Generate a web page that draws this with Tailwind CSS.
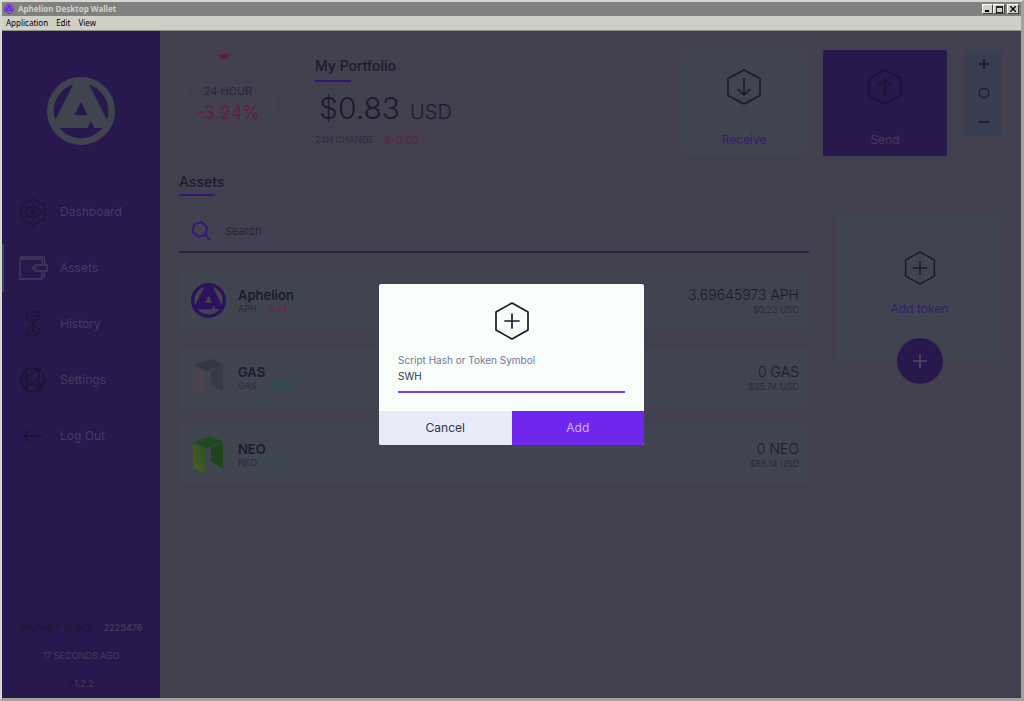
<!DOCTYPE html>
<html lang="en">
<head>
<meta charset="utf-8">
<title>Aphelion Desktop Wallet</title>
<script src="https://cdn.jsdelivr.net/npm/@tailwindcss/browser@4"></script>
</head>
<body class="flex h-screen flex-col overflow-hidden border-2 border-r-3 border-b-3 border-t-[#d8d7cf] border-r-[#a3a29a] border-b-[#a3a29a] border-l-[#d8d7cf] bg-[#42404f] font-['Inter',sans-serif] text-[#1c1a2e]">
<svg class="hidden">
  <symbol id="logo" viewBox="0 0 68 68">
    <circle cx="34" cy="34" r="30.7" fill="none" stroke="currentColor" stroke-width="6.6"/>
    <path fill="currentColor" fill-rule="evenodd" d="M27 6 7 45l6 6h27.7l3-7.3 3.6 7.3h8.4l5.3-6L41.3 6ZM34 24.7l6.7 13.6H27.300Z"/>
  </symbol>
  <symbol id="hexplus" viewBox="0 0 34 38">
    <path d="M17 1 33 10v18L17 37 1 28V10ZM17 12v14M10 19h14" fill="none" stroke="currentColor" stroke-width="1.700" stroke-linejoin="round" stroke-linecap="round"/>
  </symbol>
</svg>

<header class="shrink-0">
  <div class="flex h-3.5 items-center gap-1 bg-[#808080] pr-0.5 pl-0.5">
    <svg class="size-2.5 text-[#7126ee]"><use href="#logo"/></svg>
    <h1 class="flex-1 font-['Noto_Sans',sans-serif] text-[8px] leading-3 font-bold text-[#d4d0c8]">Aphelion Desktop Wallet</h1>
    <div class="flex">
      <button aria-label="Minimize" class="flex h-2.5 w-[11px] items-end border border-t-white border-r-[#404040] border-b-[#404040] border-l-white bg-[#d4d0c8] px-0.5 pb-px"><span class="h-0.5 w-1 bg-black"></span></button>
      <button aria-label="Maximize" class="flex h-2.5 w-3 items-center justify-center border border-t-white border-r-[#404040] border-b-[#404040] border-l-white bg-[#d4d0c8]"><span class="size-[7px] border border-t-2 border-[#222]"></span></button>
      <button aria-label="Close" class="ml-0.5 flex h-2.5 w-3 items-center justify-center border border-t-white border-r-[#404040] border-b-[#404040] border-l-white bg-[#d4d0c8]"><svg class="size-1.5" viewBox="0 0 6 6"><path d="M0 0 6 6M6 0 0 6" stroke="#111" stroke-width="1.500"/></svg></button>
    </div>
  </div>
  <nav class="flex h-[15px] items-center gap-2 border-b border-[#8f8e89] bg-[#d0cfc6] px-1 font-['Noto_Sans',sans-serif] text-[8px] leading-3 text-black">
    <button>Application</button><button>Edit</button><button>View</button>
  </nav>
</header>

<div class="relative flex min-h-0 flex-1">
  <aside class="flex w-[158px] shrink-0 flex-col bg-[#28184e] pt-[46px] text-[#443d5a]">
    <svg class="size-[68px] self-center text-[#40444f]"><use href="#logo"/></svg>
    <nav class="mt-[39px] flex flex-col text-[12px]">
      <a href="#" class="flex h-14 items-center gap-3 pl-4">
        <svg class="h-7 w-[30px] text-[#1c1533]" viewBox="0 0 30 28" fill="none" stroke="currentColor" stroke-width="1.300"><path d="M15 1 27 7.500v13L15 27 3 20.500v-13ZM7 14c4-7 12-7 16 0-4 7-12 7-16 0Z"/><path d="m15 11 3 3-3 3-3-3Z" fill="currentColor"/></svg>Dashboard</a>
      <a href="#" class="flex h-14 items-center">
        <span class="h-12 w-0.5 bg-[#40444f]"></span>
        <svg class="mr-3 ml-3.5 h-7 w-[30px]" viewBox="0 0 30 28" fill="none" stroke="currentColor" stroke-width="1.300"><path d="M24 10V5H4.500L2 3.500M2 3.500V25h22v-7M2.500 3H26.500v7M26.500 18v4.500H24M18 11h11v6H18l-4-3ZM17.500 13v2"/></svg>Assets</a>
      <a href="#" class="flex h-14 items-center gap-3 pl-4">
        <svg class="h-7 w-[30px] text-[#1c1533]" viewBox="0 0 30 28" fill="none" stroke="currentColor" stroke-width="1.300"><ellipse cx="15" cy="4" rx="6.500" ry="2.500"/><path d="M8.500 4v3c0 3 6.500 5 6.500 7s-6.500 4-6.500 7v2c0 2 2 3 6.500 3s6.500-1 6.500-3v-2c0-3-6.500-5-6.500-7s6.500-4 6.500-7V4M11.500 8.500 15 11l3.500-2.500M15 16v5M10 24l5-3 5 3"/></svg>History</a>
      <a href="#" class="flex h-14 items-center gap-3 pl-4">
        <svg class="h-7 w-[30px] text-[#1a1430]" viewBox="0 0 30 28" fill="none" stroke="currentColor" stroke-width="1.400" stroke-linejoin="round"><path d="M8.500 3h13L28 14l-6.500 11h-13L2 14ZM8.500 3v22M8.500 11 21 3l-.5 18L8.500 13.500M20.500 21l1 4M2 14l6.500-3M8.500 25l-6.500-11M8.500 21 21 13M28 14l-7.500 7"/></svg>Settings</a>
      <a href="#" class="flex h-14 items-center gap-3 pl-4">
        <svg class="h-7 w-[30px] text-[#1a1430]" viewBox="0 0 30 28" fill="none" stroke="currentColor" stroke-width="1.600"><path d="M24 14H6M12.500 7.500 6 14l6.500 6.500"/></svg>Log Out</a>
    </nav>
    <div class="mt-auto flex flex-col items-center text-[9px] leading-7">
      <p class="flex gap-2.5"><span class="text-[#1c1533]">MAINNET BLOCK</span><span class="font-medium">2225476</span></p>
      <p>17 SECONDS AGO</p>
      <p><span class="text-[#1c1533]">V</span>1.2.2</p>
    </div>
  </aside>

  <main class="min-w-0 flex-1 px-[19px] pt-[19px]">
    <section class="flex">
      <div class="relative size-[98px] shrink-0 pt-[33px] text-center">
        <svg class="absolute inset-0 size-full" viewBox="0 0 98 98" fill="none"><circle cx="50" cy="52" r="45" stroke="#40444f" stroke-width="3"/><path d="m40.500 6.600 9-.8" stroke="#641a3f" stroke-width="4.500"/></svg>
        <p class="relative text-[11px] leading-4 text-[#292641]">24 HOUR</p>
        <p class="relative mt-0.5 text-[18px] leading-6 text-[#641e43]">-3.24%</p>
      </div>
      <div class="ml-[38px] flex-1 pt-2">
        <h2 class="text-[14px] leading-4 font-medium">My Portfolio</h2>
        <div class="mt-1.5 h-0.5 w-9 bg-[#351477]"></div>
        <p class="mt-2.5 ml-1 flex items-baseline gap-2.5 text-[30px] leading-8 font-light">$0.83 <span class="text-xl">USD</span></p>
        <p class="mt-1.5 flex items-center gap-2.5 text-[9px] leading-4 text-[#292a41]">24H CHANGE <span class="text-[11px] text-[#641e43]">$-0.03</span></p>
      </div>
      <button class="flex h-[106px] w-[124px] flex-col items-center justify-between rounded-xs bg-[#40444f] pt-[19px] pb-2 text-[12px] leading-4 text-[#351c6c]">
        <svg class="h-9 w-[34px] text-[#1a1a2f]" viewBox="0 0 34 36" fill="none" stroke="currentColor" stroke-width="1.600" stroke-linejoin="round"><path d="M17 1 33 9.500v17L17 35 1 26.500v-17ZM17 9v17M10.500 20l6.500 6 6.500-6"/></svg>Receive</button>
      <button class="ml-[17px] flex h-[106px] w-[124px] flex-col items-center justify-between rounded-xs bg-[#28184e] pt-[19px] pb-2 text-[12px] leading-4 text-[#443d5a]">
        <svg class="h-9 w-[34px] text-[#1a142e]" viewBox="0 0 34 36" fill="none" stroke="currentColor" stroke-width="1.600" stroke-linejoin="round"><path d="M17 1 33 9.500v17L17 35 1 26.500v-17ZM17 27V10M10.500 16l6.500-6 6.500 6"/></svg>Send</button>
      <div class="ml-[18px] flex h-[86px] w-[37px] flex-col items-center justify-around rounded-xs bg-[#3a3e51] text-[#1a1a2f]">
        <button aria-label="Zoom in"><svg class="size-3" viewBox="0 0 12 12" fill="none" stroke="currentColor" stroke-width="1.600"><path d="M6 1v10M1 6h10"/></svg></button>
        <button aria-label="Reset zoom"><svg class="size-3" viewBox="0 0 12 12" fill="none" stroke="currentColor" stroke-width="1.200"><path d="m6 1 4.700 2.500v5L6 11 1.300 8.500v-5Z"/></svg></button>
        <button aria-label="Zoom out"><svg class="size-3" viewBox="0 0 12 12" stroke="currentColor" stroke-width="1.600"><path d="M1 6h10"/></svg></button>
      </div>
    </section>

    <h2 class="mt-[18px] text-[14px] leading-4 font-medium">Assets</h2>
    <div class="mt-1 h-0.5 w-9 bg-[#351477]"></div>

    <section class="mt-[18px] flex items-start gap-7">
      <div class="flex flex-1 flex-col gap-[18px]">
        <div class="flex h-[39px] items-center gap-3.5 border-b-2 border-[#222640] pb-1 pl-3">
          <svg class="size-5" viewBox="0 0 20 20" fill="none" stroke="#35157a" stroke-width="1.800" stroke-linejoin="round"><path d="m3 3.500 7.500-2.500L16 6l-1 7-7 3-6.500-5ZM14 13l5 6"/></svg>
          <input type="search" aria-label="Search" placeholder="Search" class="h-6 min-w-0 flex-1 bg-transparent text-[11px] leading-6 outline-none placeholder:text-[#262539]">
        </div>
        <article class="flex h-[59px] items-center rounded-xs bg-[#40444f] px-2.5">
          <svg class="ml-0.5 size-[35px] text-[#2c125c]"><use href="#logo"/></svg>
          <div class="ml-3 flex-1"><h3 class="text-[13px] leading-4 font-semibold">Aphelion</h3><p class="flex gap-2 text-[9px] leading-3 text-[#292a41]">APH <span class="text-[#6b2045]">-3.24</span></p></div>
          <div class="text-right"><p class="text-sm leading-[18px] font-light">3.69645973 APH</p><p class="text-[9px] leading-3 text-[#292a41]">$0.23 USD</p></div>
        </article>
        <article class="flex h-[59px] items-center rounded-xs bg-[#40444f] px-2.5">
          <svg class="ml-0.5 h-[38px] w-[35px]" viewBox="0 0 35 38"><path d="M3 6 20 0l12 6-17 6Z" fill="#343643"/><path d="M2 7.500 14 13v24L2 32Z" fill="#4b444f"/><path d="m20 12 12-5v25l-12-6Z" fill="#373946"/></svg>
          <div class="ml-3 flex-1"><h3 class="text-[13px] leading-4 font-semibold">GAS</h3><p class="flex gap-2 text-[9px] leading-3 text-[#292a41]">GAS <span class="text-[#1f5a58]">+16.85</span></p></div>
          <div class="text-right"><p class="text-sm leading-[18px] font-light">0 GAS</p><p class="text-[9px] leading-3 text-[#292a41]">$35.74 USD</p></div>
        </article>
        <article class="flex h-[59px] items-center rounded-xs bg-[#40444f] px-2.5">
          <svg class="ml-0.5 h-[38px] w-[35px]" viewBox="0 0 35 38"><defs><linearGradient id="leaf" x1="1" y1="0" x2="0" y2="1"><stop stop-color="#2a5422"/><stop offset="1" stop-color="#505b1c"/></linearGradient></defs><path d="M3 6 20 0l12 6-17 6Z" fill="#1e4a1f"/><path d="M2 7.500 14 13v24L2 32Z" fill="url(#leaf)"/><path d="m20 12 12-5v25l-12-6Z" fill="#1e4420"/></svg>
          <div class="ml-3 flex-1"><h3 class="text-[13px] leading-4 font-semibold">NEO</h3><p class="flex gap-2 text-[9px] leading-3 text-[#292a41]">NEO <span class="text-[#1f5a58]">+1.55</span></p></div>
          <div class="text-right"><p class="text-sm leading-[18px] font-light">0 NEO</p><p class="text-[9px] leading-3 text-[#292a41]">$86.14 USD</p></div>
        </article>
      </div>
      <div class="flex w-[165px] flex-col items-center">
        <div class="flex h-[147px] w-full flex-col items-center rounded-xs bg-[#40444f] pt-[37px] text-[12px] leading-4 text-[#351c6c]">
          <svg class="h-[34px] w-8 text-[#1a1a2f]"><use href="#hexplus"/></svg>
          <p class="mt-4">Add token</p>
        </div>
        <button aria-label="Add token" class="z-0 -mt-[23px] flex size-[46px] items-center justify-center rounded-full bg-[#28184e]"><svg class="size-3.5" viewBox="0 0 14 14" stroke="#504a5f" stroke-width="1.600"><path d="M7 0v14M0 7h14"/></svg></button>
      </div>
    </section>
  </main>

  <div class="absolute inset-0 z-10 flex items-center justify-center">
    <form role="dialog" aria-label="Add token" class="flex w-[265px] flex-col overflow-hidden rounded-xs bg-[#f7fdf9]">
      <svg class="mt-[18px] h-[38px] w-[34px] self-center"><use href="#hexplus"/></svg>
      <label for="token" class="mx-[19px] mt-3.5 text-[10px] leading-3 text-[#75779a]">Script Hash or Token Symbol</label>
      <input id="token" value="SWH" class="mx-[19px] h-[27px] border-b-2 border-[#7f3af0] bg-transparent pb-1.5 text-[10px] text-[#35354a] outline-none">
      <div class="mt-[18px] grid h-[34px] grid-cols-2 text-[12px]">
        <button type="button" class="bg-[#e7eaf7] text-[#35354a]">Cancel</button>
        <button type="submit" class="bg-[#7126ee] text-[#cdb4fa]">Add</button>
      </div>
    </form>
  </div>
</div>
</body>
</html>
